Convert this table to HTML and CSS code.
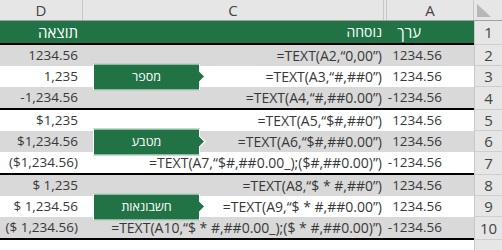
FILE: index.html
```html
<!DOCTYPE html>
<html lang="he">
<head>
<meta charset="utf-8">
<title>TEXT</title>
<link rel="stylesheet" href="styles.css">
</head>
<body>
<div class="sheet">
  <div class="colhead">
    <div class="ch">D</div>
    <div class="ch">C</div>
    <div class="ch chb"></div>
    <div class="ch">A</div>
    <div class="corner"><svg width="28" height="20" viewBox="0 0 28 20"><polygon points="3,4 3,17 17,17" fill="#b7b7b7"/></svg></div>
  </div>

  <div class="row head end">
    <div class="cells">
      <div class="d">תוצאה</div>
      <div class="c">נוסחה</div>
      <div class="b"></div>
      <div class="a ah">ערך</div>
    </div>
    <div class="rh">1</div>
  </div>

  <div class="row g">
    <div class="cells">
      <div class="d">1234.56</div>
      <div class="c">=TEXT(A2,“0,00”)</div>
      <div class="b"></div>
      <div class="a">1234.56</div>
    </div>
    <div class="rh">2</div>
  </div>
  <div class="row">
    <div class="cells">
      <div class="d">1,235</div>
      <div class="c"><span class="tag">מספר</span>=TEXT(A3,“#,##0”)</div>
      <div class="b"></div>
      <div class="a">1234.56</div>
    </div>
    <div class="rh">3</div>
  </div>
  <div class="row g end">
    <div class="cells">
      <div class="d">-1,234.56</div>
      <div class="c">=TEXT(A4,“#,##0.00”)</div>
      <div class="b"></div>
      <div class="a">-1234.56</div>
    </div>
    <div class="rh">4</div>
  </div>

  <div class="row">
    <div class="cells">
      <div class="d">$1,235</div>
      <div class="c">=TEXT(A5,“$#,##0”)</div>
      <div class="b"></div>
      <div class="a">1234.56</div>
    </div>
    <div class="rh">5</div>
  </div>
  <div class="row g">
    <div class="cells">
      <div class="d">$1,234.56</div>
      <div class="c"><span class="tag">מטבע</span>=TEXT(A6,“$#,##0.00”)</div>
      <div class="b"></div>
      <div class="a">1234.56</div>
    </div>
    <div class="rh">6</div>
  </div>
  <div class="row end">
    <div class="cells">
      <div class="d">($1,234.56)</div>
      <div class="c">=TEXT(A7,“$#,##0.00_);($#,##0.00)”)</div>
      <div class="b"></div>
      <div class="a">-1234.56</div>
    </div>
    <div class="rh">7</div>
  </div>

  <div class="row g">
    <div class="cells">
      <div class="d">$ 1,235</div>
      <div class="c">=TEXT(A8,“$ * #,##0”)</div>
      <div class="b"></div>
      <div class="a">1234.56</div>
    </div>
    <div class="rh">8</div>
  </div>
  <div class="row">
    <div class="cells">
      <div class="d">$ 1,234.56</div>
      <div class="c"><span class="tag">חשבונאות</span>=TEXT(A9,“$ * #,##0.00”)</div>
      <div class="b"></div>
      <div class="a">1234.56</div>
    </div>
    <div class="rh">9</div>
  </div>
  <div class="row g end">
    <div class="cells">
      <div class="d">($ 1,234.56)</div>
      <div class="c">=TEXT(A10,“$ * #,##0.00_);($ * #,##0.00)”)</div>
      <div class="b"></div>
      <div class="a">-1234.56</div>
    </div>
    <div class="rh">10</div>
  </div>

  <div class="row tail">
    <div class="cells"></div>
    <div class="rh"></div>
  </div>
</div>
</body>
</html>
```

FILE: styles.css
```css
* { box-sizing: border-box; }

html, body {
  margin: 0;
  padding: 0;
  background: #ffffff;
}

body {
  font-family: "Open Sans", "DejaVu Sans", sans-serif;
  color: #383838;
  width: 502px;
  height: 250px;
  overflow: hidden;
}

.sheet {
  width: 502px;
}

.colhead {
  display: grid;
  grid-template-columns: 83px 301px 3px 87px 28px;
  height: 21px;
  background: #e6e6e6;
  border-bottom: 1px solid #a0a0a0;
}

.ch {
  display: flex;
  align-items: center;
  justify-content: center;
  border-right: 1px solid #c8c8c8;
  font-size: 15px;
  color: #444444;
  line-height: 1;
}

.corner {
  display: flex;
  align-items: flex-start;
}

.row {
  display: grid;
  grid-template-columns: 474px 28px;
}

.cells {
  display: grid;
  grid-template-columns: 83px 301px 3px 87px;
  align-items: center;
  height: 21px;
  font-size: 13.5px;
  line-height: 1;
  white-space: nowrap;
  background: #ffffff;
}

.row.g .cells { background: #d9d9d9; }
.row.end .cells {
  height: 23px;
  border-bottom: 2px solid #000000;
}

.row.head .cells {
  height: 24px;
  background: #217346;
  color: #ffffff;
  font-size: 15px;
}

.row.tail .cells { height: 12px; }

.d {
  text-align: right;
  padding-right: 5px;
}

.c {
  position: relative;
  text-align: right;
  padding-right: 2px;
  font-size: 14px;
}

.a {
  text-align: right;
  padding-right: 32px;
}

.a.ah { padding-right: 53px; }

.rh {
  display: flex;
  align-items: center;
  justify-content: center;
  background: #e6e6e6;
  border-left: 1px solid #c8c8c8;
  border-bottom: 1px solid #cfcfcf;
  font-size: 15px;
  color: #444444;
  line-height: 1;
}

.tag {
  position: absolute;
  left: 10px;
  top: 50%;
  transform: translateY(-50%);
  width: 107px;
  height: 27px;
  display: flex;
  align-items: center;
  justify-content: center;
  background: #217346;
  border: 1px solid #ffffff;
  color: #ffffff;
  font-size: 12.5px;
}

.tag::before {
  content: "";
  position: absolute;
  right: -7px;
  top: 50%;
  margin-top: -6px;
  border-top: 6px solid transparent;
  border-bottom: 6px solid transparent;
  border-left: 7px solid #ffffff;
}

.tag::after {
  content: "";
  position: absolute;
  right: -5px;
  top: 50%;
  margin-top: -5px;
  border-top: 5px solid transparent;
  border-bottom: 5px solid transparent;
  border-left: 5px solid #217346;
}
```
